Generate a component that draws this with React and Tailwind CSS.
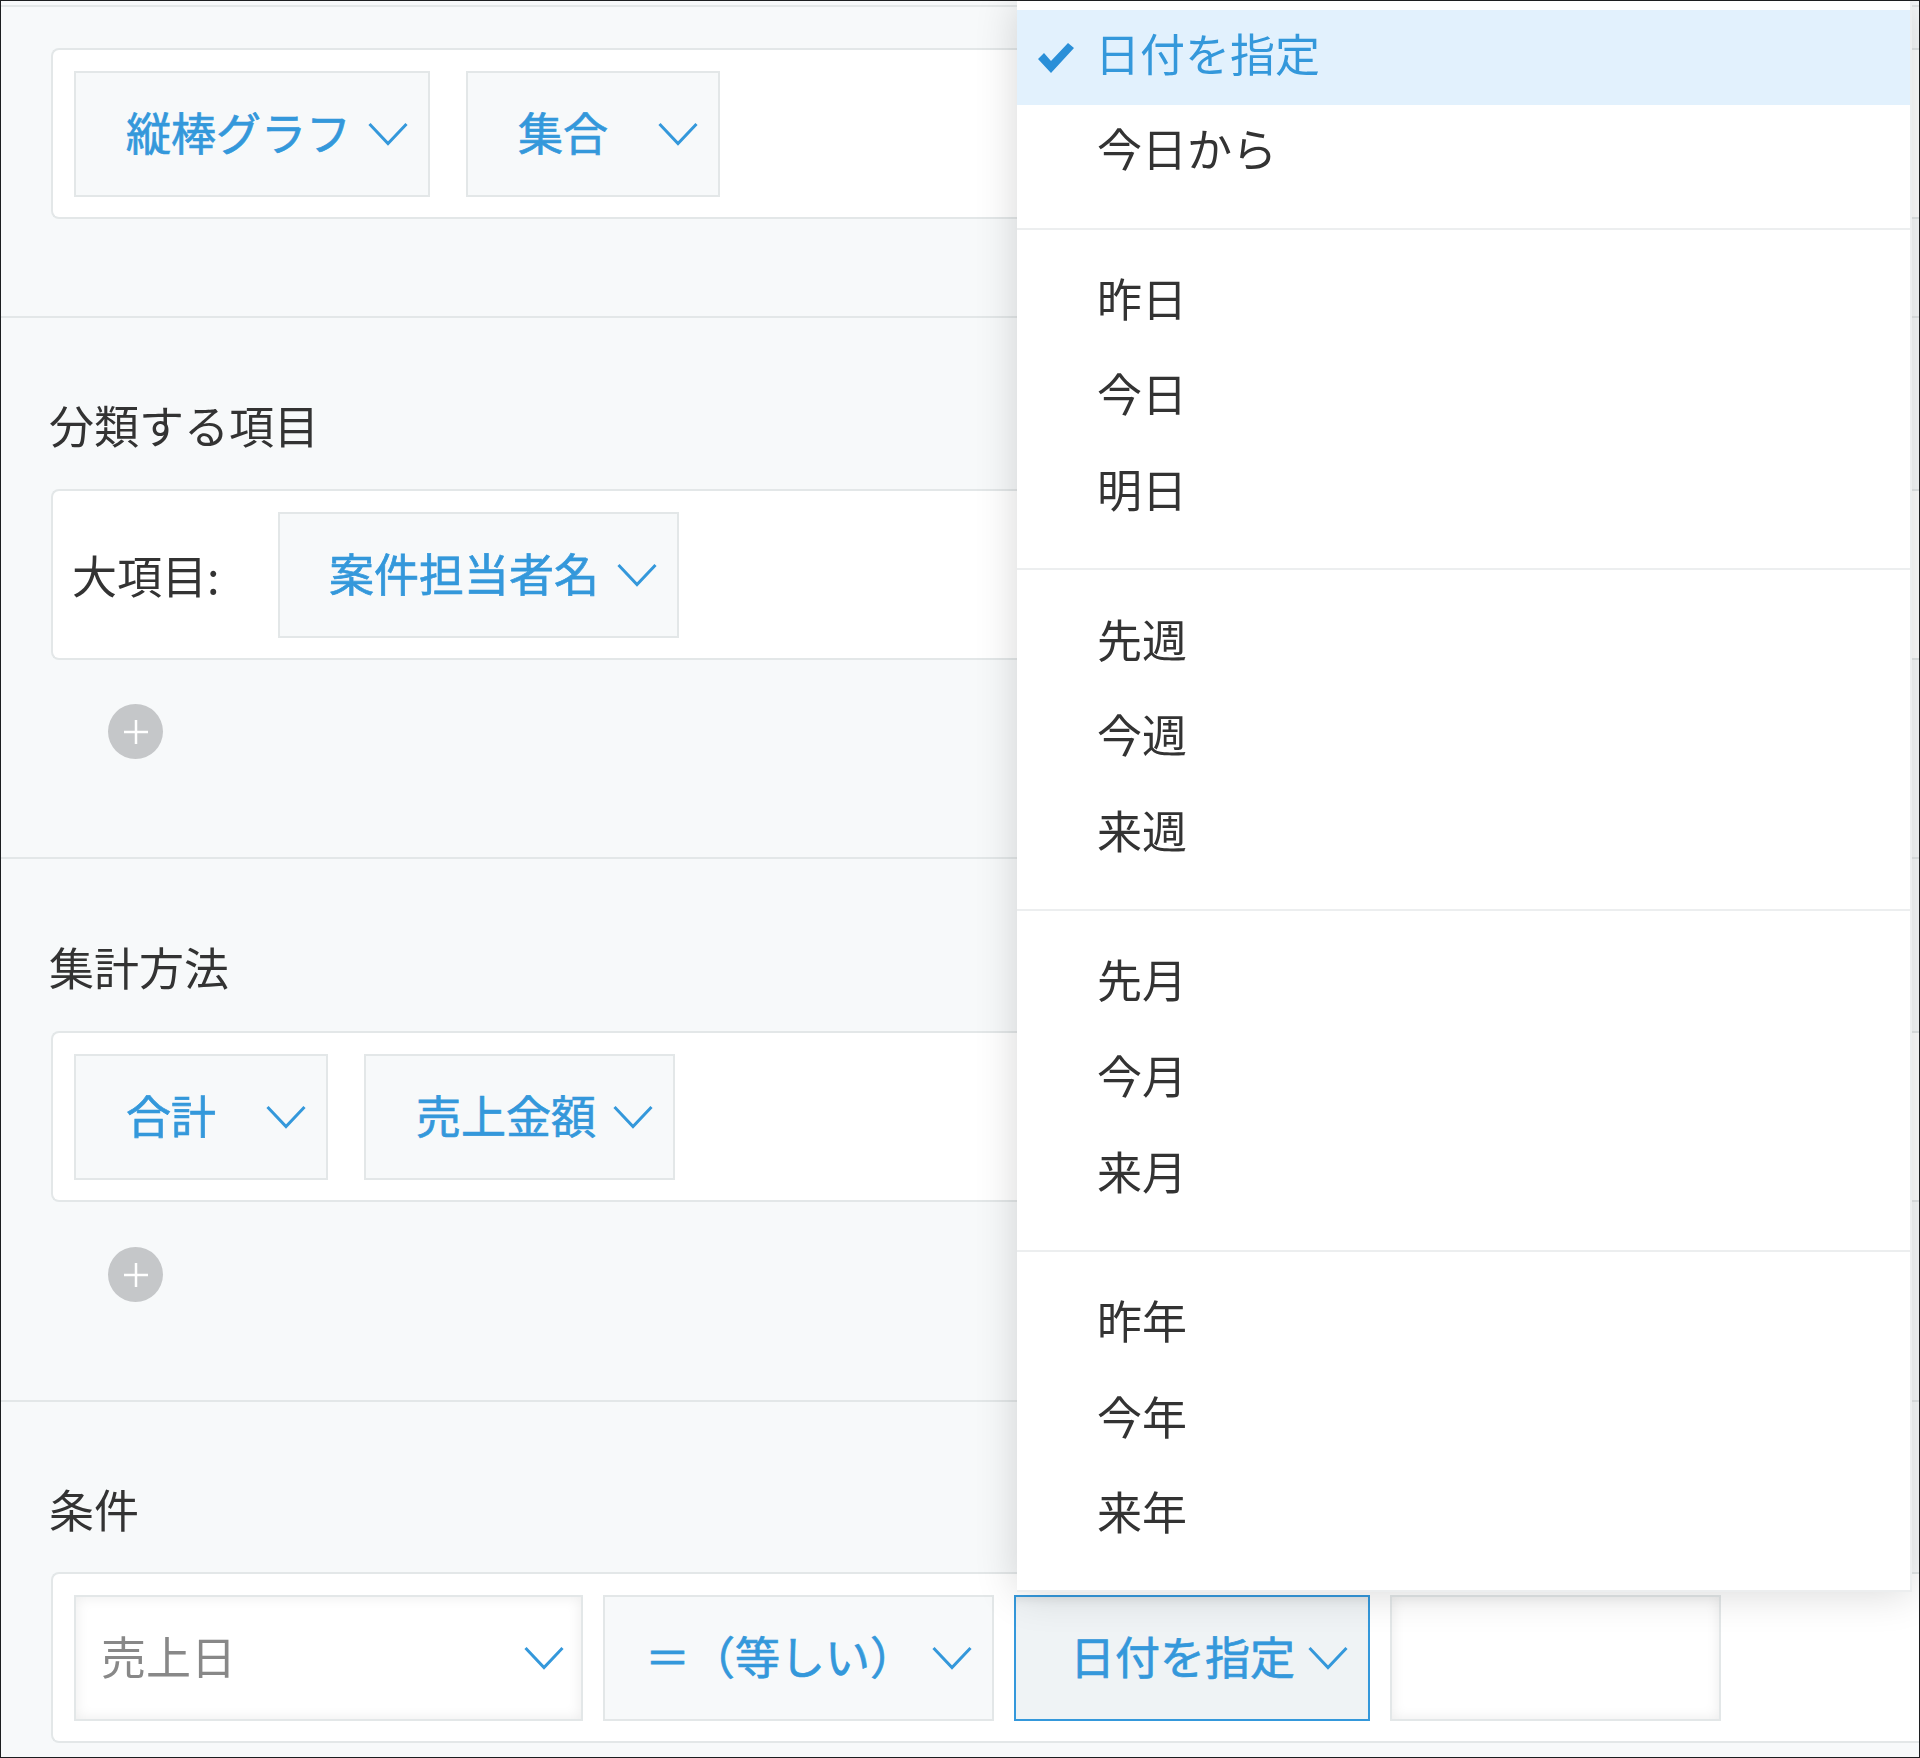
import { Fragment } from "react";

const font = { fontFamily: '"Noto Sans CJK JP", "Noto Sans", sans-serif' };

function Chevron({ className }) {
  return (
    <svg viewBox="0 0 40 24" fill="none" stroke="#3498db" strokeWidth="3" className={`w-[40px] h-[24px] shrink-0 ${className}`}>
      <path d="M1.5 2 L20 21.5 L38.5 2" />
    </svg>
  );
}

function Select({ label, width, pl, mr = "mr-[20px]", mute, active, white }) {
  let box = "bg-[#f7f9fa] border-[#e3e7e8]";
  if (active) box = "bg-[#eff3f5] border-[#3498db] shadow-[inset_0_8px_10px_-6px_rgba(0,0,0,0.08)]";
  if (white) box = "bg-white border-[#e3e7e8] shadow-[inset_0_0_14px_rgba(0,0,0,0.08)]";
  return (
    <div className={`flex items-center shrink-0 border-2 h-[126px] ${box} ${width} ${pl}`}>
      <span className={`text-[45px] leading-none -mt-[5px] whitespace-nowrap ${mute ? "text-[#888888]" : "text-[#3498db] [-webkit-text-stroke:0.7px_#3498db]"}`}>{label}</span>
      <Chevron className={`ml-auto ${mr}`} />
    </div>
  );
}

function Card({ children, className = "" }) {
  return (
    <div className={`flex items-center ml-[50px] h-[171px] pl-[21px] bg-white border-2 border-r-0 border-[#e3e7e8] rounded-l-[8px] ${className}`}>
      {children}
    </div>
  );
}

function Heading({ children }) {
  return <div className="ml-[48px] text-[45px] leading-[60px] text-[#333333]">{children}</div>;
}

function AddButton({ className }) {
  return (
    <div className={`flex items-center justify-center ml-[107px] w-[55px] h-[55px] rounded-full bg-[#c5c7c9] ${className}`}>
      <svg viewBox="0 0 26 26" stroke="white" strokeWidth="2.5" className="w-[26px] h-[26px]">
        <path d="M13 1 V25 M1 13 H25" />
      </svg>
    </div>
  );
}

const groups = [
  ["今日から"],
  ["昨日", "今日", "明日"],
  ["先週", "今週", "来週"],
  ["先月", "今月", "来月"],
  ["昨年", "今年", "来年"],
];

function Dropdown() {
  return (
    <div className="absolute left-[1016px] top-0 w-[895px] h-[1591px] pt-[9px] bg-white text-[#333333] border-r-2 border-b-2 border-[#eceeef] shadow-[0_0_40px_rgba(0,0,0,0.16)]">
      <div className="flex items-center h-[95px] bg-[#e2f1fd] text-[#3498db]">
        <svg viewBox="0 0 38 32" className="w-[38px] h-[32px] ml-[20px] mr-[20px]" fill="#2a8fd8">
          <path d="M1 17 L7 11 L14 19 L31 1 L37 6 L14 31 Z" />
        </svg>
        <span className="text-[45px] leading-none -mt-[10px]">日付を指定</span>
      </div>
      {groups.map((items, g) => (
        <Fragment key={g}>
          {g > 0 && <div className="border-t-2 border-[#eceeef] mt-[27px] mb-[25px]" />}
          {items.map((item) => (
            <div key={item} className="flex items-center h-[95.6px] pl-[80px] text-[45px] leading-none">
              <span className="-mt-[10px]">{item}</span>
            </div>
          ))}
        </Fragment>
      ))}
    </div>
  );
}

export default function App() {
  return (
    <div style={font} className="relative w-[1920px] h-[1758px] overflow-hidden bg-[#f7f9fa] border border-[#1c1e20]">
      <div className="h-full blur-[0.6px]">
        {/* グラフの種類 */}
        <div className="h-[6px] border-b-2 border-[#e3e7e8]" />
        <section className="h-[311px] pt-[41px] border-b-2 border-[#e3e7e8]">
          <Card className="gap-[36px]">
            <Select label="縦棒グラフ" width="w-[356px]" pl="pl-[50px]" />
            <Select label="集合" width="w-[254px]" pl="pl-[50px]" />
          </Card>
        </section>

        {/* 分類する項目 */}
        <section className="h-[541px] pt-[77px] border-b-2 border-[#e3e7e8]">
          <Heading>分類する項目</Heading>
          <Card className="mt-[34px]">
            <span className="text-[45px] leading-none text-[#333333] w-[206px] -ml-[2px] shrink-0">大項目:</span>
            <Select label="案件担当者名" width="w-[401px]" pl="pl-[49px]" />
          </Card>
          <AddButton className="mt-[44px]" />
        </section>

        {/* 集計方法 */}
        <section className="h-[543px] pt-[78px] border-b-2 border-[#e3e7e8]">
          <Heading>集計方法</Heading>
          <Card className="mt-[34px] gap-[36px]">
            <Select label="合計" width="w-[254px]" pl="pl-[50px]" />
            <Select label="売上金額" width="w-[311px]" pl="pl-[50px]" />
          </Card>
          <AddButton className="mt-[45px]" />
        </section>

        {/* 条件 */}
        <section className="pt-[77px]">
          <Heading>条件</Heading>
          <Card className="mt-[33px] gap-[20px]">
            <Select label="売上日" width="w-[509px]" pl="pl-[25px]" mr="mr-[17px]" mute white />
            <Select label="＝（等しい）" width="w-[391px]" pl="pl-[40px]" />
            <Select label="日付を指定" width="w-[356px]" pl="pl-[54px]" active />
            <div className="w-[331px] h-[126px] shrink-0 border-2 border-[#e3e7e8] bg-white shadow-[inset_0_0_14px_rgba(0,0,0,0.08)]" />
          </Card>
        </section>

        <Dropdown />
      </div>
    </div>
  );
}
